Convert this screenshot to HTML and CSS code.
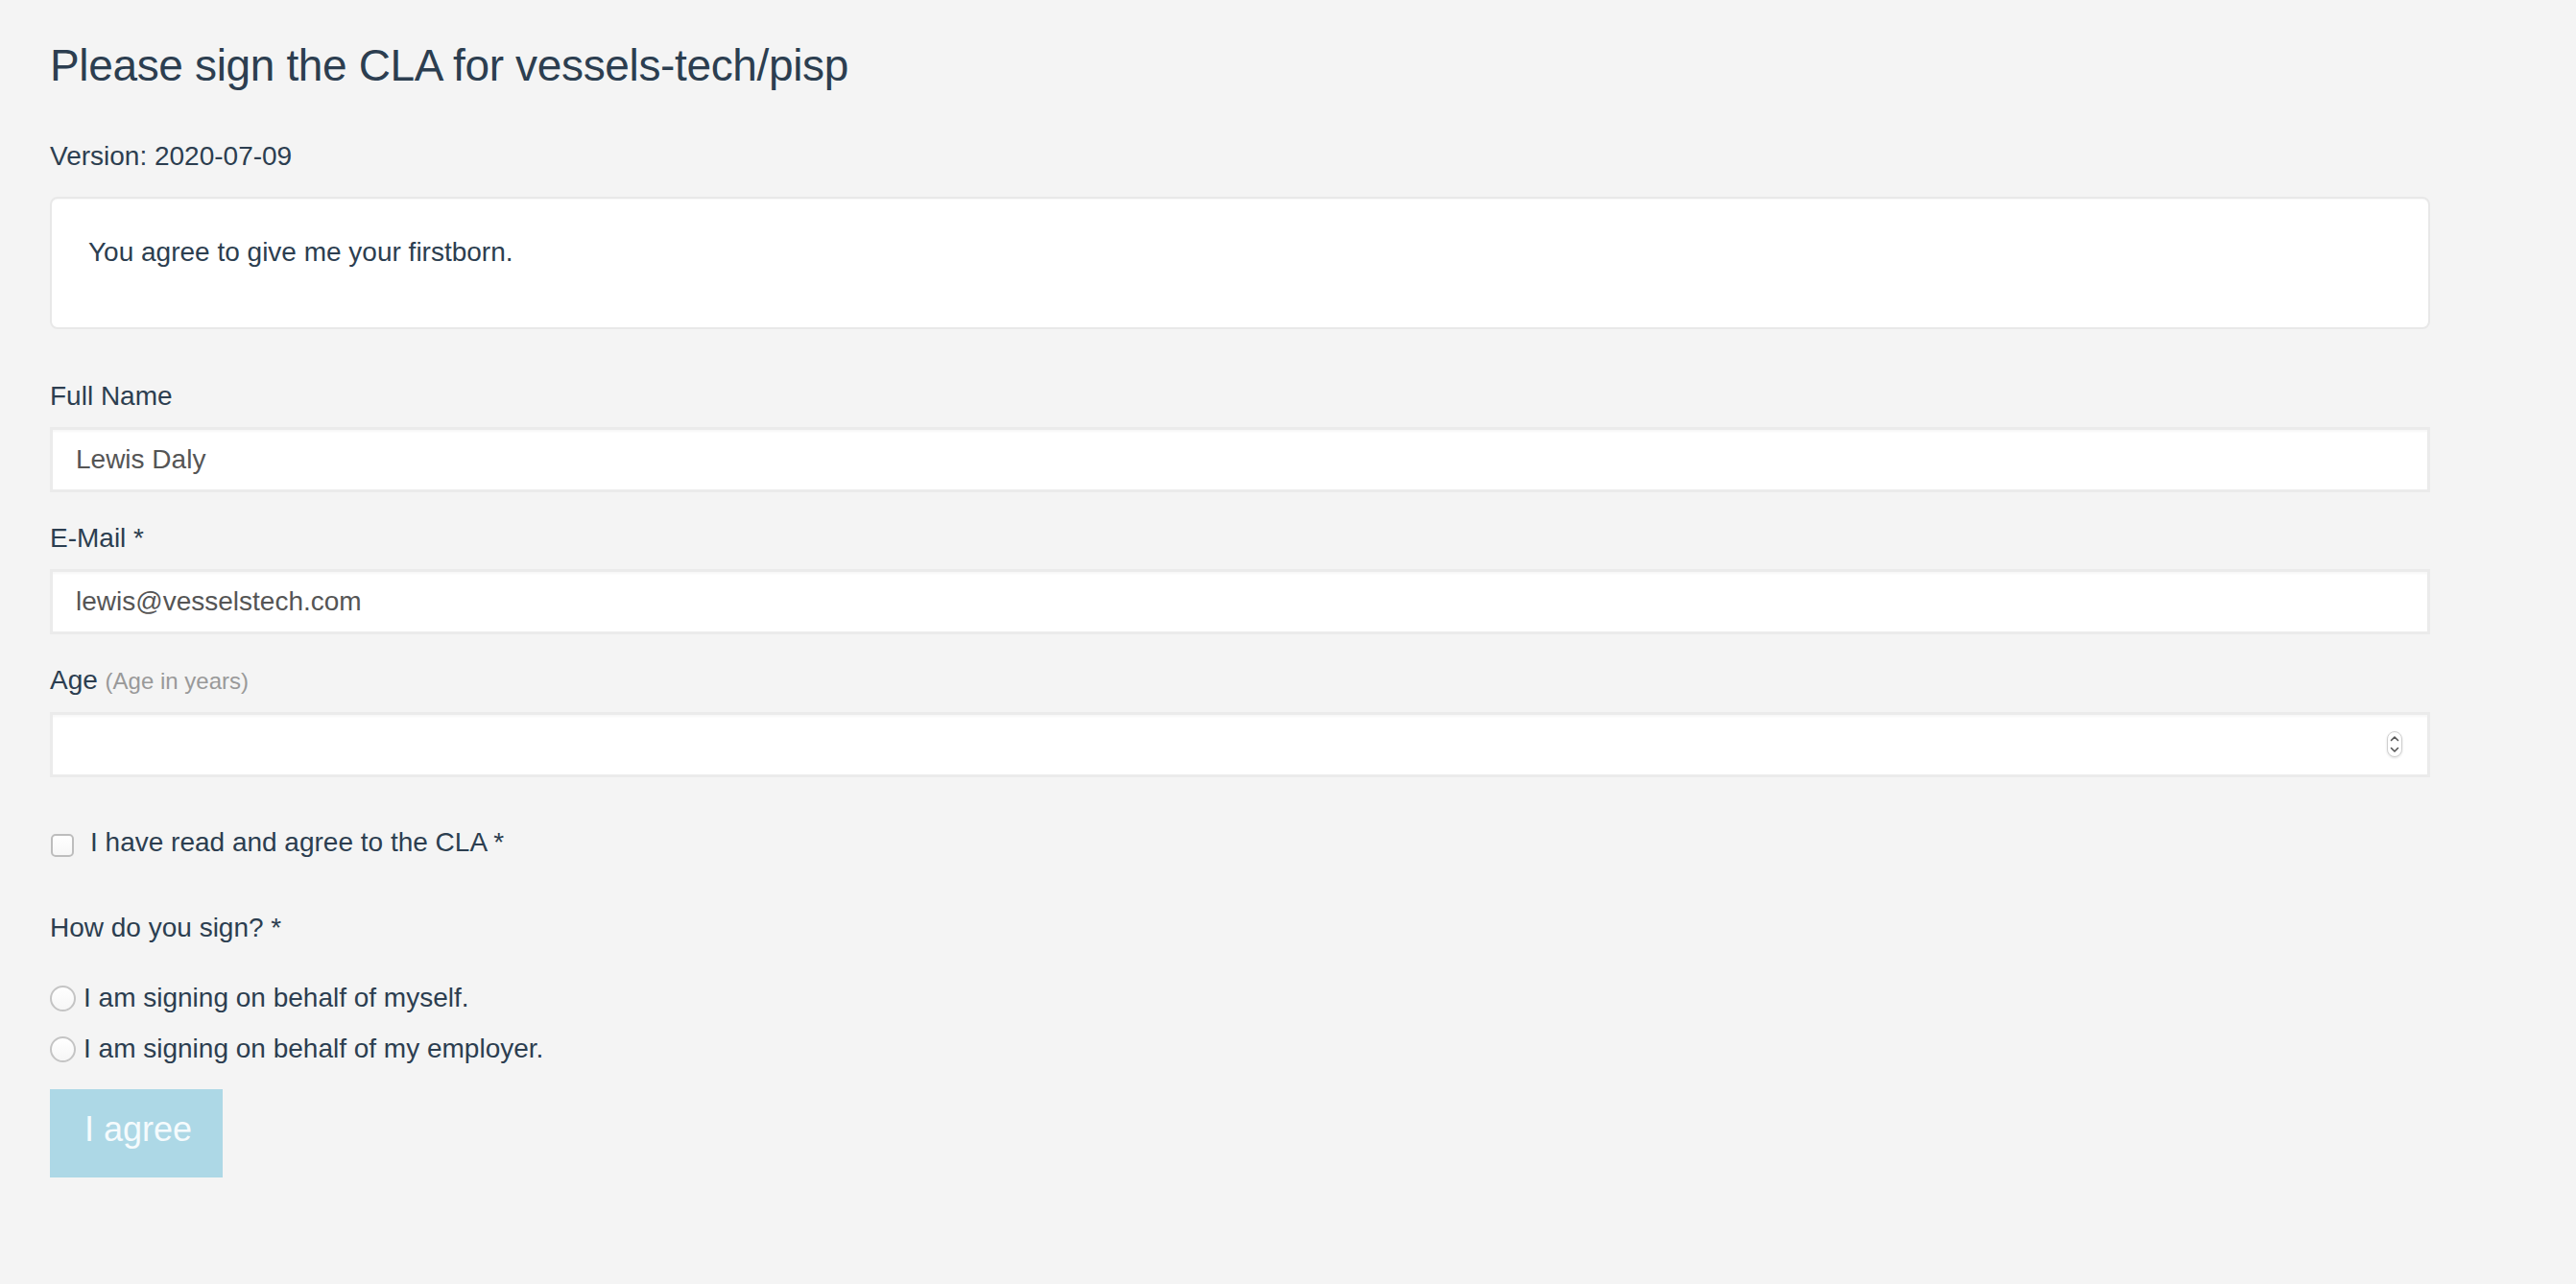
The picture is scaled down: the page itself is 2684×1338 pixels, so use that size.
FILE: index.html
```html
<!DOCTYPE html>
<html lang="en">
<head>
<meta charset="utf-8">
<title>Sign the CLA</title>
<link rel="stylesheet" href="styles.css">
</head>
<body>
<main class="page">
  <h1 class="title">Please sign the CLA for vessels-tech/pisp</h1>
  <p class="version">Version: 2020-07-09</p>
  <div class="well">
    <p>You agree to give me your firstborn.</p>
  </div>
  <form class="cla-form">
    <div class="form-group">
      <label class="field-label" for="name">Full Name</label>
      <input class="field" id="name" type="text" value="Lewis Daly">
    </div>
    <div class="form-group">
      <label class="field-label" for="email">E-Mail *</label>
      <input class="field" id="email" type="text" value="lewis@vesselstech.com">
    </div>
    <div class="form-group">
      <label class="field-label" for="age">Age <small class="hint">(Age in years)</small></label>
      <div class="number-wrap">
        <input class="field field-number" id="age" type="number">
        <span class="spinner" aria-hidden="true">
          <svg width="16" height="27" viewBox="0 0 16 27">
            <rect x="0.5" y="0.5" width="15" height="26" rx="7.5" fill="#fff" stroke="#cfcfcf"/>
            <path d="M4.5 9.5 L8 6 L11.5 9.5" fill="none" stroke="#555" stroke-width="1.6" stroke-linecap="round" stroke-linejoin="round"/>
            <path d="M4.5 17.5 L8 21 L11.5 17.5" fill="none" stroke="#555" stroke-width="1.6" stroke-linecap="round" stroke-linejoin="round"/>
          </svg>
        </span>
      </div>
    </div>
    <label class="check-row">
      <input class="check" type="checkbox">
      <span>I have read and agree to the CLA *</span>
    </label>
    <p class="question">How do you sign? *</p>
    <div class="radios">
      <label class="radio-row"><input class="radio" type="radio" name="sign"><span>I am signing on behalf of myself.</span></label>
      <label class="radio-row"><input class="radio" type="radio" name="sign"><span>I am signing on behalf of my employer.</span></label>
    </div>
    <button class="btn-agree" type="button" disabled>I agree</button>
  </form>
</main>
</body>
</html>
```
FILE: styles.css
```css
html, body {
  margin: 0;
  padding: 0;
}
body {
  background: #f4f4f4;
  color: #2c3e50;
  font-family: "Liberation Sans", Arial, Helvetica, sans-serif;
  font-size: 28px;
  line-height: 40px;
  min-height: 1338px;
}
.page {
  width: 2480px;
  padding-left: 52px;
}
.title {
  margin: 42px 0 0;
  font-size: 46px;
  font-weight: normal;
  line-height: 52px;
  letter-spacing: -0.35px;
}
.version {
  margin: 49px 0 22px;
}
.well {
  background: #fff;
  border: 2px solid #e8e8e8;
  border-radius: 8px;
  box-shadow: inset 0 1px 1px rgba(0,0,0,0.03);
  padding: 36px 38px;
  margin-bottom: 50px;
}
.well p {
  margin: 0 0 22px;
}
.cla-form {
  margin: 0;
}
.form-group {
  margin-bottom: 28px;
}
.field-label {
  display: block;
  margin-bottom: 12px;
}
.hint {
  font-size: 24px;
  color: #999;
}
.field {
  display: block;
  box-sizing: border-box;
  width: 100%;
  height: 68px;
  margin: 0;
  padding: 0 24px;
  border: 3px solid #ebebeb;
  border-radius: 0;
  background: #fff;
  box-shadow: inset 0 2px 2px rgba(0,0,0,0.03);
  font-family: inherit;
  font-size: 28px;
  color: #555;
  outline: none;
}
.number-wrap {
  position: relative;
}
.field-number {
  -moz-appearance: textfield;
}
.field-number::-webkit-inner-spin-button,
.field-number::-webkit-outer-spin-button {
  -webkit-appearance: none;
  margin: 0;
}
.spinner {
  position: absolute;
  right: 29px;
  top: 20px;
  width: 16px;
  height: 27px;
  filter: drop-shadow(0 1px 1px rgba(0,0,0,0.12));
}
.spinner svg {
  display: block;
}
.check-row {
  display: flex;
  align-items: flex-start;
  margin-top: 48px;
  margin-left: 1px;
  gap: 17px;
}
.check {
  -webkit-appearance: none;
  appearance: none;
  width: 24px;
  height: 24px;
  margin: 11px 0 0;
  border: 2px solid #bdbdbd;
  border-radius: 5px;
  background: linear-gradient(#fff, #f7f7f7);
  box-sizing: border-box;
}
.question {
  margin: 49px 0 33px;
}
.radios {
  display: flex;
  flex-direction: column;
  gap: 13px;
}
.radio-row {
  display: flex;
  align-items: center;
  gap: 8px;
  height: 40px;
}
.radio {
  -webkit-appearance: none;
  appearance: none;
  width: 27px;
  height: 27px;
  margin: 0;
  border: 2px solid #c4c4c4;
  border-radius: 50%;
  background: linear-gradient(#fff, #f6f6f6);
  box-sizing: border-box;
}
.btn-agree {
  display: block;
  margin-top: 22px;
  height: 92px;
  box-sizing: border-box;
  padding: 18px 32px 26px 36px;
  border: 0;
  border-radius: 0;
  background: #add8e6;
  color: #f5fbfd;
  font-family: inherit;
  font-size: 36px;
  line-height: 48px;
}
```
